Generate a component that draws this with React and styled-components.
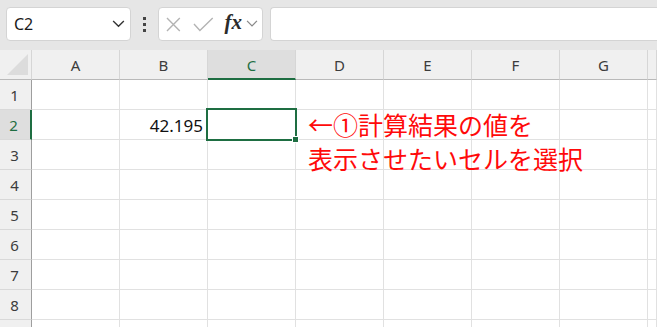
import React from 'react';
import styled, { createGlobalStyle } from 'styled-components';

const GlobalStyle = createGlobalStyle`
  html, body {
    margin: 0;
    padding: 0;
    background: #ffffff;
    overflow: hidden;
  }
  body {
    font-family: "Noto Sans", "Noto Sans CJK JP", sans-serif;
  }
`;

const Page = styled.div`
  width: 657px;
  height: 327px;
  overflow: hidden;
  position: relative;
  background: #fff;
`;

const Toolbar = styled.div`
  height: 50px;
  box-sizing: border-box;
  background: #e6e6e6;
  display: flex;
  align-items: flex-start;
  padding: 7px 0 0 6px;
`;

const Box = styled.div`
  height: 34px;
  box-sizing: border-box;
  background: #fff;
  border: 1px solid #d4d4d4;
  border-radius: 4px;
  display: flex;
  align-items: center;
`;

const NameBox = styled(Box)`
  width: 125px;
  padding: 0 5px 0 7px;
  justify-content: space-between;
  font-size: 16px;
  color: #1a1a1a;
`;

const Dots = styled.div`
  width: 27px;
  height: 34px;
  display: flex;
  flex-direction: column;
  align-items: center;
  justify-content: center;
  gap: 3px;
  span {
    width: 3px;
    height: 3px;
    background: #444;
  }
`;

const FormulaButtons = styled(Box)`
  width: 105px;
  padding: 0 4px 0 7px;
  gap: 10px;
`;

const FxGroup = styled.span`
  display: flex;
  align-items: center;
  gap: 4px;
`;

const Fx = styled.span`
  font-family: "Liberation Serif", "DejaVu Serif", serif;
  font-style: italic;
  font-weight: bold;
  font-size: 21px;
  color: #2b2b2b;
  margin-left: 1px;
  line-height: 1;
  margin-top: -3px;
`;

const FormulaInput = styled(Box)`
  flex: 1;
  margin-left: 7px;
  border-right: none;
  border-radius: 4px 0 0 4px;
`;

const Sheet = styled.div`
  display: grid;
  grid-template-columns: 32px repeat(7, 88px) 1fr;
  grid-auto-rows: 30px;
  position: relative;
`;

const Cell = styled.div`
  box-sizing: border-box;
  border-right: 1px solid #e1e1e1;
  border-bottom: 1px solid #e1e1e1;
  position: relative;
  display: flex;
  align-items: center;
  justify-content: flex-end;
  padding: 1px 4px 0 0;
  font-size: 17px;
  color: #111;
`;

const ColHead = styled.div`
  box-sizing: border-box;
  background: ${(p) => (p.$active ? '#dedede' : '#f0f0f0')};
  border-right: 1px solid #d6d6d6;
  border-bottom: ${(p) => (p.$active ? '2px solid #1e6e42' : '1px solid #b9b9b9')};
  color: ${(p) => (p.$active ? '#1e6e42' : '#3c3c3c')};
  font-size: 15px;
  display: flex;
  align-items: center;
  justify-content: center;
  padding-top: ${(p) => (p.$active ? '1px' : '0')};
`;

const RowHead = styled.div`
  box-sizing: border-box;
  background: ${(p) => (p.$active ? '#dedede' : '#f0f0f0')};
  border-right: ${(p) => (p.$active ? '2px solid #1e6e42' : '1px solid #9e9e9e')};
  border-bottom: 1px solid #d9d9d9;
  color: ${(p) => (p.$active ? '#1e6e42' : '#3c3c3c')};
  font-size: 15px;
  display: flex;
  align-items: center;
  justify-content: center;
  padding-right: ${(p) => (p.$active ? '3px' : '2px')};
`;

const Corner = styled.div`
  box-sizing: border-box;
  background: #f0f0f0;
  border-right: 1px solid #d6d6d6;
  border-bottom: 1px solid #b9b9b9;
  display: flex;
  align-items: flex-end;
  justify-content: flex-end;
  padding: 0 3px 4px 0;
`;

const Selection = styled.div`
  position: absolute;
  left: -2px;
  top: -2px;
  right: -2px;
  bottom: -2px;
  border: 2px solid #1e6e42;
  pointer-events: none;
  z-index: 2;
`;

const Handle = styled.div`
  position: absolute;
  right: -4px;
  bottom: -4px;
  width: 5px;
  height: 5px;
  background: #1e6e42;
  border: 1px solid #fff;
`;

const Note = styled.div`
  position: absolute;
  left: 308px;
  top: 57px;
  font-family: "Noto Sans CJK JP", sans-serif;
  font-size: 25px;
  line-height: 34px;
  color: #ff0a0a;
  white-space: nowrap;
  z-index: 3;
`;

const cols = ['A', 'B', 'C', 'D', 'E', 'F', 'G', ''];

function Chevron({ size = 13, color = '#333' }) {
  return (
    <svg width={size} height={size * 0.6} viewBox="0 0 13 8" fill="none">
      <polyline points="1,1 6.5,6.5 12,1" stroke={color} strokeWidth="1.4" />
    </svg>
  );
}

export default function App() {
  // row 9 is only a sliver at the bottom edge, its number is hidden
  const rows = [1, 2, 3, 4, 5, 6, 7, 8, 9];
  return (
    <Page>
      <GlobalStyle />
      <Toolbar>
        <NameBox>
          <span>C2</span>
          <Chevron />
        </NameBox>
        <Dots>
          <span />
          <span />
          <span />
        </Dots>
        <FormulaButtons>
          <svg width="15" height="15" viewBox="0 0 15 15">
            <path d="M1 1 L14 14 M14 1 L1 14" stroke="#b3b3b3" strokeWidth="1.4" />
          </svg>
          <svg width="21" height="15" viewBox="0 0 21 15" style={{ marginLeft: 2 }}>
            <polyline points="1,7 7,13.5 20,1" fill="none" stroke="#b3b3b3" strokeWidth="1.4" />
          </svg>
          <FxGroup>
            <Fx>fx</Fx>
            <Chevron size={12} color="#888" />
          </FxGroup>
        </FormulaButtons>
        <FormulaInput />
      </Toolbar>
      <Sheet>
        <Corner>
          <svg width="21" height="21" viewBox="0 0 21 21">
            <polygon points="21,0 21,21 0,21" fill="#dcdcdc" />
          </svg>
        </Corner>
        {cols.map((c, i) => (
          <ColHead key={i} $active={c === 'C'}>
            {c}
          </ColHead>
        ))}
        {rows.map((r) => (
          <React.Fragment key={r}>
            <RowHead $active={r === 2}>{r < 9 ? r : ''}</RowHead>
            {cols.map((c, i) => (
              <Cell key={i}>
                {r === 2 && c === 'B' && '42.195'}
                {r === 2 && c === 'C' && (
                  <Selection>
                    <Handle />
                  </Selection>
                )}
              </Cell>
            ))}
          </React.Fragment>
        ))}
        <Note>
          ←①計算結果の値を
          <br />
          表示させたいセルを選択
        </Note>
      </Sheet>
    </Page>
  );
}
